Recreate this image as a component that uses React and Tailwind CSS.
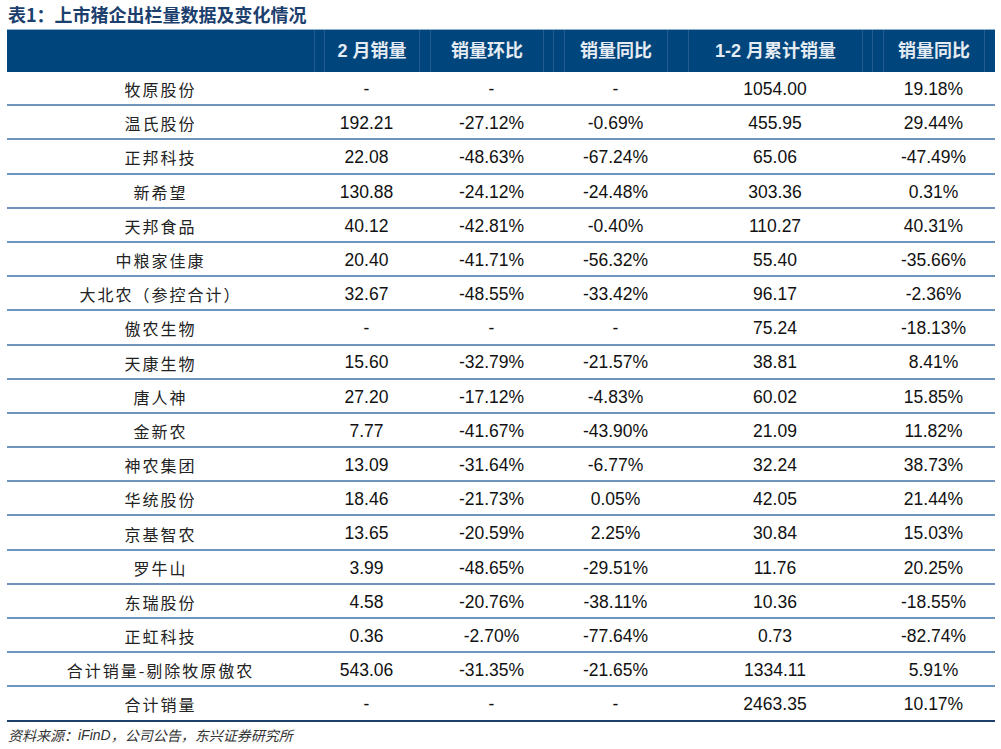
const rows = [
  ["牧原股份", "-", "-", "-", "1054.00", "19.18%"],
  ["温氏股份", "192.21", "-27.12%", "-0.69%", "455.95", "29.44%"],
  ["正邦科技", "22.08", "-48.63%", "-67.24%", "65.06", "-47.49%"],
  ["新希望", "130.88", "-24.12%", "-24.48%", "303.36", "0.31%"],
  ["天邦食品", "40.12", "-42.81%", "-0.40%", "110.27", "40.31%"],
  ["中粮家佳康", "20.40", "-41.71%", "-56.32%", "55.40", "-35.66%"],
  ["大北农（参控合计）", "32.67", "-48.55%", "-33.42%", "96.17", "-2.36%"],
  ["傲农生物", "-", "-", "-", "75.24", "-18.13%"],
  ["天康生物", "15.60", "-32.79%", "-21.57%", "38.81", "8.41%"],
  ["唐人神", "27.20", "-17.12%", "-4.83%", "60.02", "15.85%"],
  ["金新农", "7.77", "-41.67%", "-43.90%", "21.09", "11.82%"],
  ["神农集团", "13.09", "-31.64%", "-6.77%", "32.24", "38.73%"],
  ["华统股份", "18.46", "-21.73%", "0.05%", "42.05", "21.44%"],
  ["京基智农", "13.65", "-20.59%", "2.25%", "30.84", "15.03%"],
  ["罗牛山", "3.99", "-48.65%", "-29.51%", "11.76", "20.25%"],
  ["东瑞股份", "4.58", "-20.76%", "-38.11%", "10.36", "-18.55%"],
  ["正虹科技", "0.36", "-2.70%", "-77.64%", "0.73", "-82.74%"],
  ["合计销量-剔除牧原傲农", "543.06", "-31.35%", "-21.65%", "1334.11", "5.91%"],
  ["合计销量", "-", "-", "-", "2463.35", "10.17%"],
];

function HeaderCell({ children }) {
  return (
    <div className="flex items-center justify-center border-l border-[#245a8e] text-[18px] font-bold text-[#e4ebf3]">
      {children}
    </div>
  );
}

function Gap() {
  return <div className="border-l border-[#245a8e]" />;
}

export default function App() {
  return (
    <div className="w-[1001px] h-[749px] bg-white font-['Liberation_Sans','Noto_Sans_CJK_SC',sans-serif]">
      <div className="h-[29px] pl-[8px] flex items-center text-[18px] font-bold text-[#1c3f6e] font-['Noto_Sans_CJK_SC','Noto_Sans',sans-serif]">
        表1：上市猪企出栏量数据及变化情况
      </div>

      <div className="ml-[7px] w-[988px]">
        {/* header */}
        <div className="h-[43px] bg-[#00457c] border-t border-[#8fb0d0] grid grid-cols-[307px_10px_95px_11px_113px_10px_11px_103px_21px_174px_10px_11px_101px_11px]">
          <div />
          <Gap />
          <HeaderCell>2 月销量</HeaderCell>
          <Gap />
          <HeaderCell>销量环比</HeaderCell>
          <Gap />
          <Gap />
          <HeaderCell>销量同比</HeaderCell>
          <Gap />
          <HeaderCell>1-2 月累计销量</HeaderCell>
          <Gap />
          <Gap />
          <HeaderCell>销量同比</HeaderCell>
          <Gap />
        </div>

        {/* body */}
        {rows.map((r, i) => (
          <div
            key={i}
            className={
              "h-[34.2px] pt-[2px] grid grid-cols-[307px_105px_145px_103px_216px_101px_11px] items-center border-b-2 " +
              (i === rows.length - 1 ? "border-[#1c3f6b]" : "border-[#6f95bd]")
            }
          >
            <div className="text-center text-[16px] tracking-[2px] text-[#222] font-['Noto_Sans_CJK_SC','Noto_Sans',sans-serif]">
              {r[0]}
            </div>
            {r.slice(1).map((v, j) => (
              <div key={j} className="text-center text-[17.5px] text-[#111]">
                {v}
              </div>
            ))}
            <div />
          </div>
        ))}
      </div>

      <div className="h-[28px] pl-[8px] flex items-center italic text-[14px] text-[#333] font-['Noto_Sans_CJK_SC','Noto_Sans',sans-serif]">
        资料来源：<span className="font-['Liberation_Sans',sans-serif]">iFinD</span>，公司公告，东兴证券研究所
      </div>
    </div>
  );
}
